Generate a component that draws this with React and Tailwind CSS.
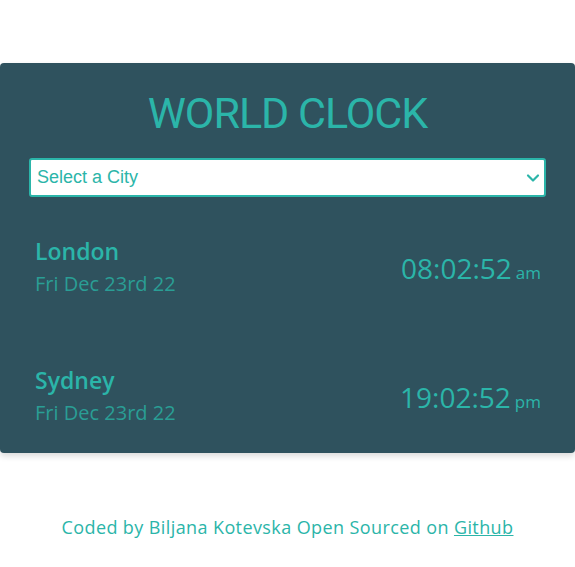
import { ChevronDown } from "lucide-react";

const cities = [
  { name: "London", date: "Fri Dec 23rd 22", time: "08:02:52", ampm: "am" },
  { name: "Sydney", date: "Fri Dec 23rd 22", time: "19:02:52", ampm: "pm" },
];

export default function App() {
  return (
    <div className="min-h-[567px] bg-white pt-[63px]" style={{ fontFamily: "'Open Sans', sans-serif" }}>
      <div className="rounded-[4px] bg-[#2f525e] px-[29px] pb-[25px] pt-[24px] shadow-[0_3px_6px_rgba(0,0,0,0.15)]">
        <h1 className="text-center font-['Roboto',sans-serif] text-[43px] font-normal leading-[53px] tracking-[-1px] text-[#2bb5a9]">
          WORLD CLOCK
        </h1>
        <div className="relative mt-[18px]">
          <select className="h-[39px] w-full appearance-none rounded-[3px] border-2 border-[#2bb5a9] bg-white px-[6px] font-['Liberation_Sans',sans-serif] text-[18px] text-[#2bb5a9] outline-none">
            <option>Select a City</option>
          </select>
          <ChevronDown className="pointer-events-none absolute right-[3px] top-[10px] h-[20px] w-[20px] text-[#2bb5a9]" strokeWidth={2.6} />
        </div>
        <div className="mt-[39px] flex flex-col gap-[66px] px-[6px] pr-[5px]">
          {cities.map((c) => (
            <div key={c.name} className="flex items-center justify-between">
              <div className="flex flex-col">
                <span className="text-[23px] font-semibold leading-[30px] text-[#2bb5a9]">{c.name}</span>
                <span className="mt-[3px] text-[20px] leading-[30px] text-[#2a9e95]">{c.date}</span>
              </div>
              <div className="flex items-baseline gap-[4px] text-[#2bb5a9]">
                <span className="text-[28px] leading-none">{c.time}</span>
                <span className="text-[17px] leading-none">{c.ampm}</span>
              </div>
            </div>
          ))}
        </div>
      </div>
      <p className="mt-[61px] text-center text-[18px] tracking-[0.4px] text-[#2bb5a9]">
        Coded by Biljana Kotevska Open Sourced on <a className="underline">Github</a>
      </p>
    </div>
  );
}
